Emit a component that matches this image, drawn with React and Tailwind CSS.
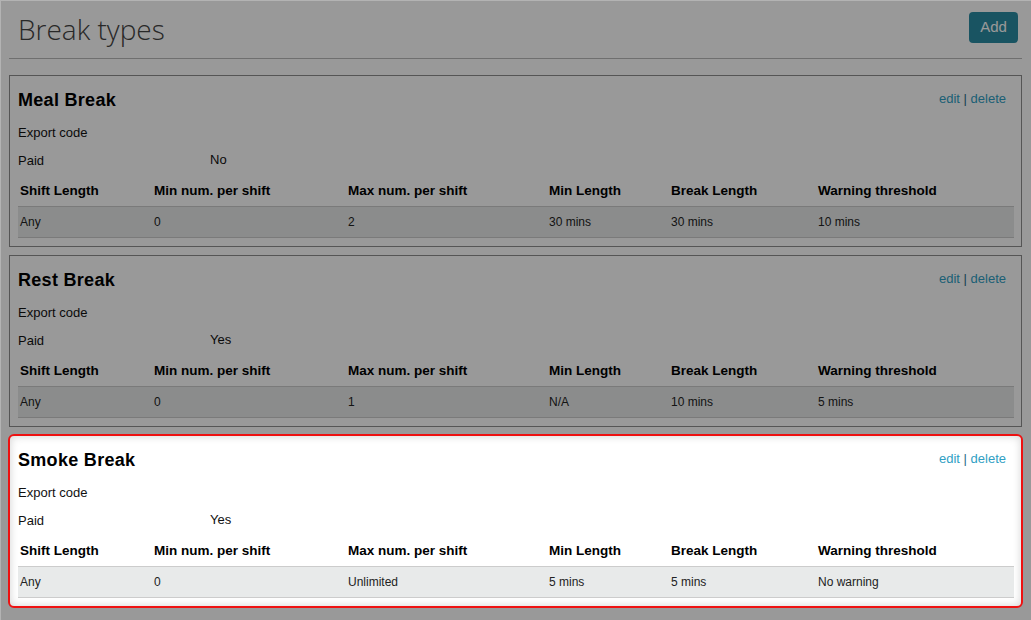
import React from 'react';

const columns = [
  { label: 'Shift Length', w: 'w-[134px]' },
  { label: 'Min num. per shift', w: 'w-[194px]' },
  { label: 'Max num. per shift', w: 'w-[201px]' },
  { label: 'Min Length', w: 'w-[122px]' },
  { label: 'Break Length', w: 'w-[147px]' },
  { label: 'Warning threshold', w: 'flex-1' },
];

const breakTypes = [
  { name: 'Meal Break', paid: 'No', row: ['Any', '0', '2', '30 mins', '30 mins', '10 mins'] },
  { name: 'Rest Break', paid: 'Yes', row: ['Any', '0', '1', 'N/A', '10 mins', '5 mins'] },
  { name: 'Smoke Break', paid: 'Yes', row: ['Any', '0', 'Unlimited', '5 mins', '5 mins', 'No warning'], highlight: true },
];

const BreakCard = ({ item }) => {
  const frame = item.highlight
    ? 'relative z-10 -mx-px -my-px border-2 border-[#ee1111] rounded-[6px] bg-white shadow-[inset_0_0_8px_rgba(0,0,0,0.18)]'
    : 'border border-[#8e8e8e] bg-white';

  return (
    <div className={`${frame} pl-[8px] pr-[7px] pt-[13px] pb-[8px]`}>
      <div className="flex justify-between items-center h-[22px]">
        <h2 className="text-[18px] font-bold text-black tracking-[0.3px] leading-[22px]">{item.name}</h2>
        <div className="text-[13px] pr-[8px] -mt-[3px] text-[#31a0c4]">
          <a href="#">edit</a> <span className="text-[#1f6d8a]">|</span> <a href="#">delete</a>
        </div>
      </div>
      <div className="mt-[8px] h-[28px] flex items-center text-[13px] text-[#111]">Export code</div>
      <div className="h-[28px] flex items-center text-[13px] text-[#111]">
        <span className="w-[192px]">Paid</span>
        <span className="-mt-[3px]">{item.paid}</span>
      </div>
      <div className="mt-[1px] h-[30px] flex items-center text-[13.5px] font-bold text-black">
        {columns.map((c) => (
          <div key={c.label} className={`${c.w} pl-[2px]`}>{c.label}</div>
        ))}
      </div>
      <div className="h-[32px] flex items-center bg-[#e8eaea] border-y border-[#cccccc] text-[12px] text-[#222]">
        {item.row.map((v, i) => (
          <div key={i} className={`${columns[i].w} pl-[2px]`}>{v}</div>
        ))}
      </div>
    </div>
  );
};

export default function App() {
  return (
    <div className="relative min-h-screen bg-white font-['Liberation_Sans',Arial,sans-serif]">
      <div className="px-[9px]">
        <div className="flex justify-between items-start h-[58px] pl-[9px] pr-[4px] pt-[12px]">
          <h1 className="font-['Open_Sans',sans-serif] font-light text-[28px] leading-[36px] text-[#444] -mt-[1px]">Break types</h1>
          <button className="h-[31px] w-[49px] rounded-[4px] bg-[#2b8ca3] text-white text-[15px]">Add</button>
        </div>
        <div className="border-t border-[#b9b9b9]" />
        <div className="mt-[16px] flex flex-col gap-[8px] pb-[14px]">
          {breakTypes.map((b) => (
            <BreakCard key={b.name} item={b} />
          ))}
        </div>
      </div>
      <div className="fixed inset-0 z-[5] bg-black/40 border-t border-l border-[#b3b3b3]" />
    </div>
  );
}
